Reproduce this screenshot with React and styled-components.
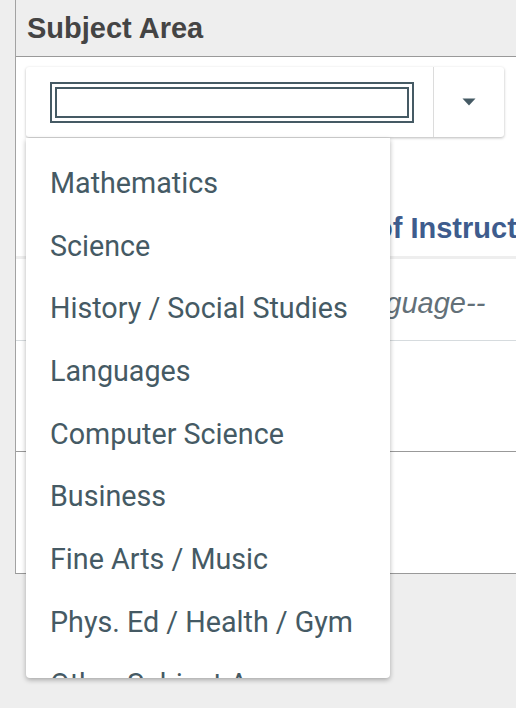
import React from "react";
import styled, { createGlobalStyle } from "styled-components";

const GlobalStyle = createGlobalStyle`
  html, body {
    margin: 0;
    padding: 0;
    background: #eeeeee;
    overflow: hidden;
    width: 516px;
    height: 708px;
  }
  * { box-sizing: border-box; }
`;

const Page = styled.div`
  display: flex;
  padding-left: 15px;
  width: 516px;
  height: 708px;
  align-items: flex-start;
`;

const Panel = styled.section`
  flex: 1;
  min-width: 0;
  border-left: 1px solid #a2a2a2;
  border-bottom: 1px solid #999;
  background: #fff;
`;

const Header = styled.h2`
  margin: 0;
  height: 57px;
  padding-left: 11px;
  background: #eeeeee;
  border-bottom: 1px solid #999;
  font-family: "Liberation Sans", Arial, sans-serif;
  font-weight: 700;
  font-size: 29px;
  line-height: 56px;
  color: #444;
  white-space: nowrap;
`;

const Body = styled.div`
  padding-top: 10px;
`;

const SelectWrap = styled.div`
  padding-left: 10px;
`;

const SelectCard = styled.div`
  position: relative;
  display: flex;
  width: 478px;
  height: 70px;
  background: #fff;
  border-radius: 3px;
  box-shadow: 0 1px 3px rgba(0, 0, 0, 0.28);
`;

const InputCell = styled.div`
  flex: 1;
  display: flex;
  align-items: center;
  padding-left: 29px;
`;

const TextInput = styled.input`
  width: 354px;
  height: 31px;
  border: 2px solid #455a64;
  outline: 2px solid #455a64;
  outline-offset: 3px;
  background: #fff;
  padding: 0 6px;
  font-family: Roboto, sans-serif;
  font-size: 20px;
`;

const ArrowCell = styled.div`
  width: 71px;
  border-left: 1px solid #dcdcdc;
  display: flex;
  align-items: center;
  justify-content: center;
`;

const Menu = styled.ul`
  position: absolute;
  z-index: 10;
  top: calc(100% + 1px);
  left: 0;
  width: 364px;
  height: 540px;
  margin: 0;
  padding: 13.6px 0 0;
  list-style: none;
  background: #fff;
  overflow: hidden;
  border-radius: 0 0 4px 4px;
  box-shadow: 0 2px 5px rgba(0, 0, 0, 0.3);
`;

const MenuItem = styled.li`
  padding: 14.35px 24px;
  font-family: Roboto, "Noto Sans", sans-serif;
  font-size: 28.7px;
  line-height: 34px;
  color: #455a64;
  white-space: nowrap;
`;

const SectionHeading = styled.h3`
  margin: 71px 0 0;
  height: 51px;
  padding-left: 214px;
  padding-bottom: 8px;
  border-bottom: 3px solid #eeeeee;
  font-family: "Liberation Sans", Arial, sans-serif;
  font-weight: 700;
  font-size: 29px;
  line-height: 40px;
  color: #3e5c8d;
  white-space: nowrap;
  overflow: hidden;
`;

const LanguageRow = styled.div`
  height: 82px;
  padding-top: 27px;
  padding-left: 213px;
  border-bottom: 1px solid #d6dbde;
  font-family: "Liberation Sans", Arial, sans-serif;
  font-style: italic;
  font-size: 29px;
  line-height: 34px;
  color: #637078;
  white-space: nowrap;
  overflow: hidden;
`;

const Spacer = styled.div`
  height: ${(p) => p.$h}px;
  border-bottom: ${(p) => (p.$line ? "1px solid #999" : "none")};
`;

const subjects = [
  "Mathematics",
  "Science",
  "History / Social Studies",
  "Languages",
  "Computer Science",
  "Business",
  "Fine Arts / Music",
  "Phys. Ed / Health / Gym",
  "Other Subject Area",
];

export default function App() {
  return (
    <>
      <GlobalStyle />
      <Page>
        <Panel>
          <Header>Subject Area</Header>
          <Body>
            <SelectWrap>
              <SelectCard>
                <InputCell>
                  <TextInput type="text" aria-label="Subject Area" />
                </InputCell>
                <ArrowCell>
                  <svg width="14" height="8" viewBox="0 0 14 8">
                    <polygon points="0.5,0.5 13.5,0.5 7,7.5" fill="#455a64" />
                  </svg>
                </ArrowCell>
                <Menu>
                  {subjects.map((s) => (
                    <MenuItem key={s}>{s}</MenuItem>
                  ))}
                </Menu>
              </SelectCard>
            </SelectWrap>
            <SectionHeading>Language of Instruction</SectionHeading>
            <LanguageRow>--Select Language--</LanguageRow>
            <Spacer $h={111} $line />
            <Spacer $h={121} />
          </Body>
        </Panel>
      </Page>
    </>
  );
}
